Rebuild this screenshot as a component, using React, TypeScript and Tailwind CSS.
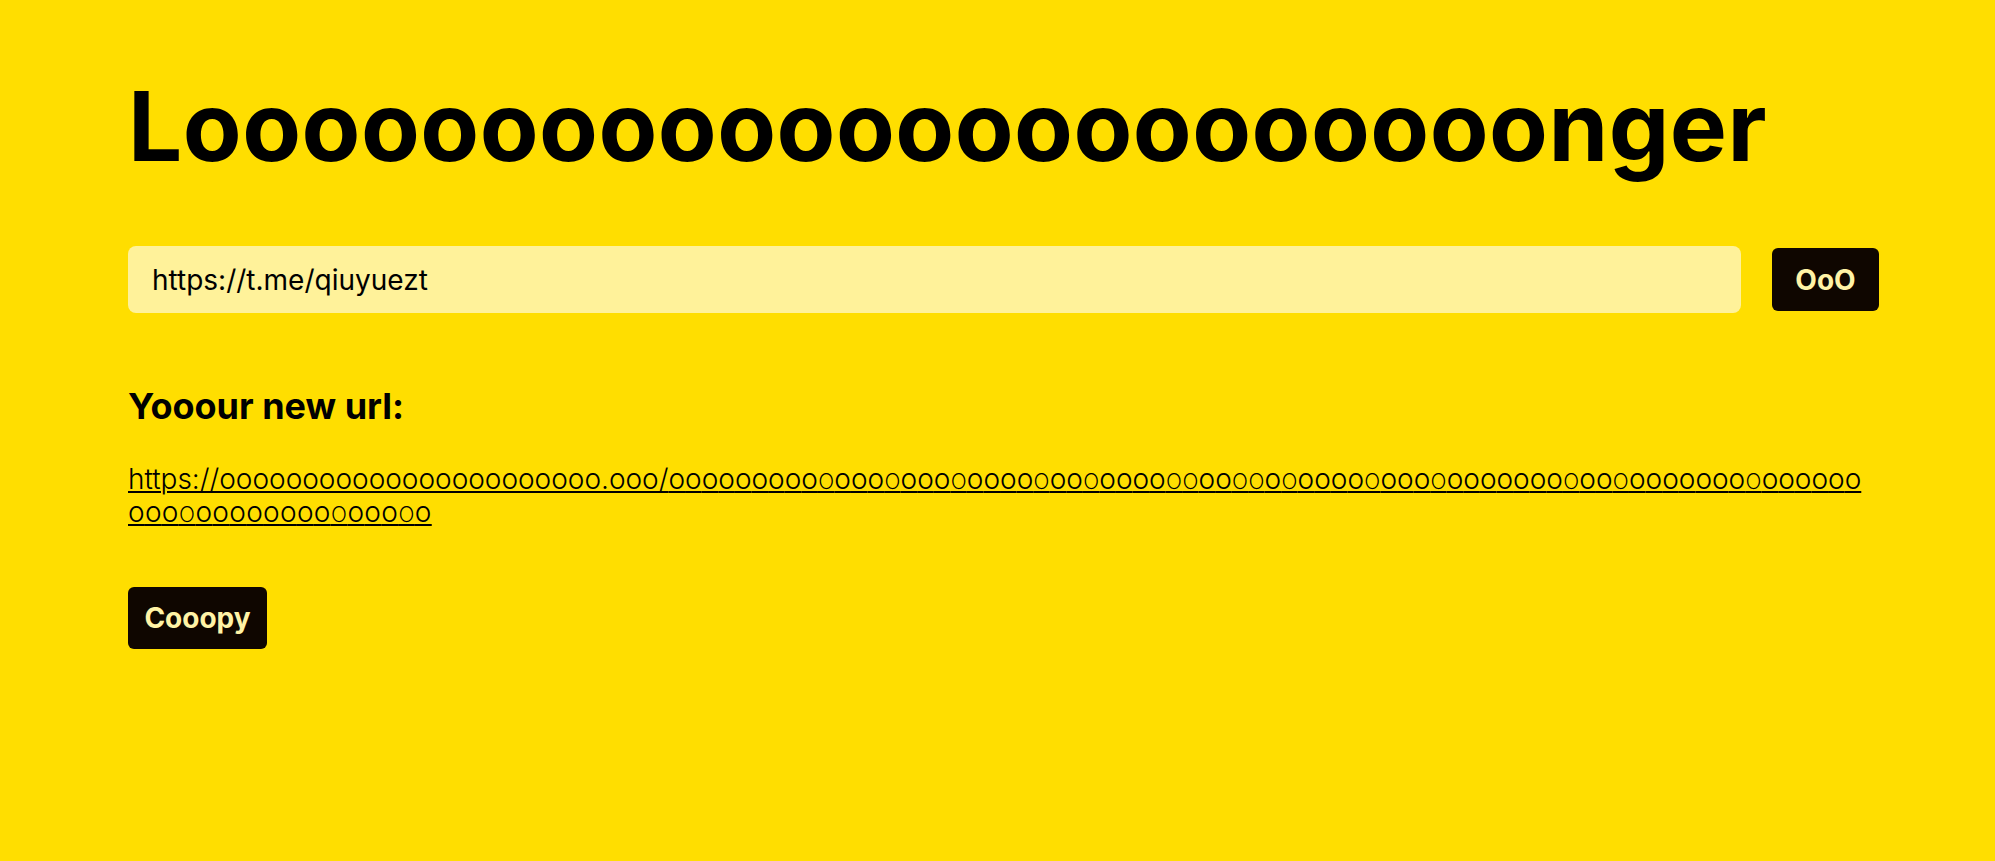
import React from "react";

const PART_A = "OOOOOOOOOtOOOtOOOtOOOOtO";
const PART_B = "OtOOOOttOOttOtOOOOtOOOtOOOOOOOt";
const PART_C = "OOtOOOOOOOtOOOOOO";
const LINE_2 = "OOOtOOOOOOOOtOOOtO";

function Seq({ s, prefix }: { s: string; prefix: string }) {
  return (
    <>
      {s.split("").map((c, i) =>
        c === "t" ? (
          <span key={prefix + i} className="font-extralight">
            o
          </span>
        ) : (
          <span key={prefix + i}>o</span>
        )
      )}
    </>
  );
}

export default function App() {
  return (
    <div className="min-h-screen w-full bg-[#ffde00] font-['Inter',sans-serif] text-black">
      <div className="ml-[128px] w-[1751px] pt-[78px]">
        <h1 className="text-[96px] font-bold leading-none tracking-[0.5px]">
          Looooooooooooooooooooooonger
        </h1>

        <div className="mt-[72px] flex items-center gap-[31px]">
          <input
            readOnly
            value="https://t.me/qiuyuezt"
            className="h-[67px] flex-1 rounded-lg bg-[#fff29a] px-6 text-[28px] font-normal text-black outline-none"
          />
          <button className="flex h-[63px] w-[107px] items-center justify-center rounded-md bg-[#0f0600] text-[28px] font-bold text-[#fff3a6]">
            OoO
          </button>
        </div>

        <h2 className="mt-[75px] text-[36px] font-bold leading-none">
          Yooour new url:
        </h2>

        <div className="mt-[39px] text-[28px] font-light leading-[33px] break-all">
          <a
            href="#"
            className="underline decoration-2 underline-offset-2"
          >
            https://ooooooooooooooooooooooo.ooo/
            <Seq s={PART_A} prefix="a" />
            <Seq s={PART_B} prefix="b" />
            <Seq s={PART_C} prefix="c" />
            <br />
            <span className="tracking-[0.3px]">
              <Seq s={LINE_2} prefix="d" />
            </span>
          </a>
        </div>

        <button className="mt-[58px] flex h-[62px] w-[139px] items-center justify-center rounded-md bg-[#0f0600] text-[28px] font-bold text-[#fff3a6]">
          Cooopy
        </button>
      </div>
    </div>
  );
}
